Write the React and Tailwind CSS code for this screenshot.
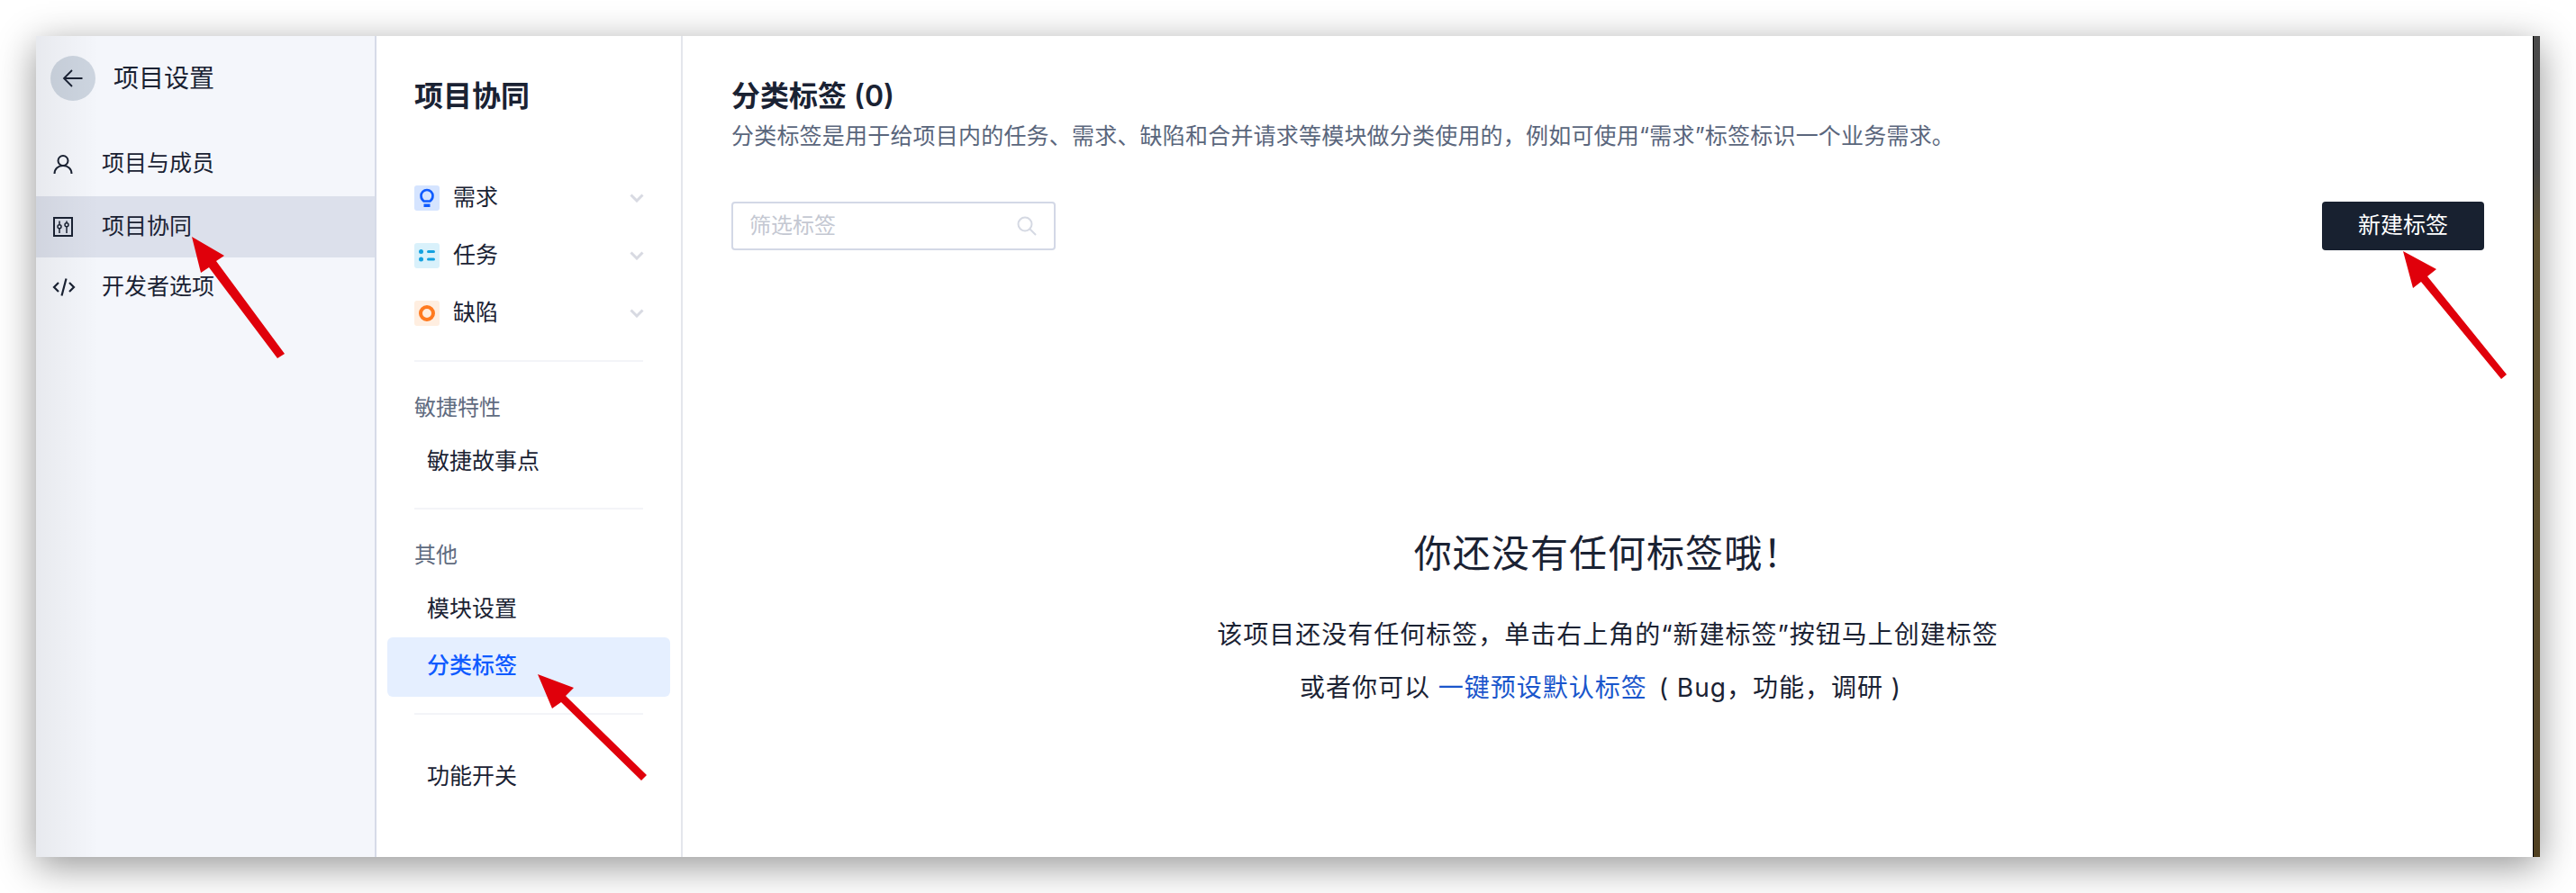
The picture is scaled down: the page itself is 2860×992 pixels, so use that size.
import React from "react";

const COMMA = "\uFF0C";

function Back() {
  return (
    <svg width="24" height="24" viewBox="0 0 24 24" fill="none" stroke="#1a2233" strokeWidth="1.8">
      <path d="M22.5 12H2M11 3l-9 9 9 9" />
    </svg>
  );
}
function UserIcon() {
  return (
    <svg width="24" height="24" viewBox="0 0 24 24" fill="none" stroke="#1a2233" strokeWidth="2">
      <circle cx="12" cy="8.5" r="5.5" />
      <path d="M2.5 23c0-5.5 4-9 9.5-9s9.5 3.5 9.5 9" />
    </svg>
  );
}
function SliderIcon() {
  return (
    <svg width="24" height="24" viewBox="0 0 24 24" fill="none" stroke="#1a2233" strokeWidth="2">
      <rect x="2" y="2" width="20" height="20" />
      <path d="M8 5.5v4M8 14v5M16 5.5v2M16 12v7" strokeWidth="1.5" />
      <circle cx="8" cy="11.8" r="2" strokeWidth="1.5" />
      <circle cx="16" cy="9.7" r="2" strokeWidth="1.5" />
    </svg>
  );
}
function CodeIcon() {
  return (
    <svg width="26" height="24" viewBox="0 0 26 24" fill="none" stroke="#1a2233" strokeWidth="2.2">
      <path d="M7 7l-5 5 5 5M19 7l5 5-5 5" />
      <path d="M15.5 2.5L10.5 21.5" />
    </svg>
  );
}
function Chevron() {
  return (
    <svg width="16" height="10" viewBox="0 0 16 10" fill="none" stroke="#d8dae2" strokeWidth="3">
      <path d="M1.5 1.5L8 8l6.5-6.5" />
    </svg>
  );
}
function Bulb() {
  return (
    <span className="flex h-7 w-7 items-center justify-center rounded-[3px] bg-[#d5e4ff]">
      <svg width="16" height="22" viewBox="0 0 16 22" fill="none">
        <path d="M4.5 14.5C2.600 13 1.500 11 1.500 8.500a6.500 6.500 0 0 1 13 0c0 2.500-1.100 4.500-3 6z" stroke="#0f5bff" strokeWidth="2.600" />
        <rect x="4.500" y="17.500" width="7" height="3.500" fill="#0f5bff" />
      </svg>
    </span>
  );
}
function TaskIcon() {
  return (
    <span className="flex h-7 w-7 items-center justify-center rounded-[3px] bg-[#d9f1fb]">
      <svg width="18" height="14" viewBox="0 0 18 14" fill="#12a1e0">
        <circle cx="2.500" cy="2.500" r="2.500" />
        <circle cx="2.500" cy="11" r="2.500" />
        <rect x="9" y="1" width="9" height="3" rx="1.500" />
        <rect x="9" y="9.500" width="9" height="3" rx="1.500" />
      </svg>
    </span>
  );
}
function BugIcon() {
  return (
    <span className="flex h-7 w-7 items-center justify-center rounded-[3px] bg-[#ffeee0]">
      <span className="h-[18px] w-[18px] rounded-full border-4 border-[#ff7a1f]" />
    </span>
  );
}
function SearchIcon() {
  return (
    <svg width="22" height="22" viewBox="0 0 22 22" fill="none" stroke="#d5d9e3" strokeWidth="2">
      <circle cx="9" cy="9" r="7.500" />
      <path d="M14.500 14.500L21 21" />
    </svg>
  );
}
function Arrow({ points }) {
  return <polygon points={points} fill="#e0000b" />;
}
function Divider() {
  return <div className="mx-[42px] h-[2px] bg-[#f3f4f8]" />;
}

export default function App() {
  return (
    <div lang="zh-CN" className="relative h-[992px] w-[2860px] overflow-hidden bg-white p-10 font-[Inter,'Noto_Sans_CJK_SC',sans-serif] text-[#1a2233]">
      <div className="flex h-[912px] w-[2780px] bg-white shadow-[0_10px_40px_rgba(0,0,0,0.42)]">
        <aside className="relative flex w-[378px] shrink-0 flex-col border-r-2 border-[#d6dbe8] bg-[#f4f6fb]">
          <div className="flex items-center gap-5 pl-4 pt-[22px]">
            <button className="flex h-[50px] w-[50px] items-center justify-center rounded-full bg-[#cdd5e0]"><Back /></button>
            <span className="text-[28px] leading-[50px]">项目设置</span>
          </div>
          <nav className="mt-[36px] flex flex-col">
            <div className="flex h-[68px] items-center gap-[31px] pl-[18px] text-[25px]"><UserIcon /><span>项目与成员</span></div>
            <div className="mt-[2px] flex h-[68px] items-center gap-[31px] bg-[#dce0eb] pl-[18px] text-[25px]"><SliderIcon /><span>项目协同</span></div>
            <div className="flex h-[66px] items-center gap-[29px] pl-[18px] text-[25px]"><CodeIcon /><span>开发者选项</span></div>
          </nav>
          <div className="pointer-events-none absolute inset-y-0 left-0 w-[70px] bg-[linear-gradient(90deg,rgba(0,0,0,0.05),rgba(0,0,0,0))]" />
        </aside>

        <section className="flex w-[340px] shrink-0 flex-col border-r-2 border-[#e4e6ec]">
          <h2 className="pl-[42px] pt-[44px] text-[32px] font-bold leading-[46px]">项目协同</h2>
          <div className="mt-[58px] flex flex-col text-[25px]">
            <div className="flex h-16 items-center pl-[42px] pr-[41px]"><Bulb /><span className="ml-[15px] flex-1">需求</span><Chevron /></div>
            <div className="flex h-16 items-center pl-[42px] pr-[41px]"><TaskIcon /><span className="ml-[15px] flex-1">任务</span><Chevron /></div>
            <div className="flex h-16 items-center pl-[42px] pr-[41px]"><BugIcon /><span className="ml-[15px] flex-1">缺陷</span><Chevron /></div>
          </div>
          <div className="mt-[20px]"><Divider /></div>
          <div className="mt-[35px] pl-[42px] text-2xl leading-8 text-[#5f6b80]">敏捷特性</div>
          <div className="mt-[25px] pl-[56px] text-[25px] leading-9">敏捷故事点</div>
          <div className="mt-[34px]"><Divider /></div>
          <div className="mt-[35px] pl-[42px] text-2xl leading-8 text-[#5f6b80]">其他</div>
          <div className="mt-[25px] pl-[56px] text-[25px] leading-9">模块设置</div>
          <div className="mx-3 mt-[14px] flex h-[66px] items-center rounded-md bg-[#e5efff] pb-0.5 pl-11 text-[25px] font-medium text-[#0f5bff]">分类标签</div>
          <div className="mt-[18px]"><Divider /></div>
          <div className="mt-[50px] pl-[56px] text-[25px] leading-9">功能开关</div>
        </section>

        <main className="flex min-w-0 flex-1 flex-col px-[54px]">
          <h1 className="pt-[48px] text-[32px] font-semibold leading-[38px]">分类标签 (0)</h1>
          <p className="mt-[9px] text-[25px] leading-8 tracking-[0.2px] text-[#5a667c]">分类标签是用于给项目内的任务、需求、缺陷和合并请求等模块做分类使用的{COMMA}例如可使用“需求”标签标识一个业务需求。</p>
          <div className="mt-[57px] flex items-center justify-between">
            <label className="flex h-[54px] w-[360px] items-center rounded border-2 border-[#d3d8e6] pl-[18px] pr-[19px]">
              <input placeholder="筛选标签" className="min-w-0 flex-1 bg-transparent text-2xl outline-none placeholder:text-[#c4c8d2]" />
              <SearchIcon />
            </label>
            <button className="h-[54px] w-[180px] rounded bg-[#182130] text-[25px] text-white">新建标签</button>
          </div>
          <div className="mt-[307px] flex flex-col items-center">
            <h3 className="text-[42px] font-normal leading-[60px] tracking-wide">你还没有任何标签哦！</h3>
            <p className="mt-[40px] text-[28px] leading-10 tracking-[1px]">该项目还没有任何标签{COMMA}单击右上角的“新建标签”按钮马上创建标签</p>
            <p className="mr-4 mt-[19px] text-[28px] leading-10 tracking-[1px]">或者你可以 <span className="text-[#1a56cc]">一键预设默认标签</span> <span className="ml-[4px]">(</span> Bug{COMMA}功能{COMMA}调研 <span>)</span></p>
          </div>
        </main>

        <div className="w-2 shrink-0 border-l border-black bg-[linear-gradient(180deg,#4a4a4a_0%,#454545_16%,#5d5030_24%,#5a4d2c_60%,#55462a_90%,#4f3f20_100%)]" />
      </div>

      <svg className="pointer-events-none absolute left-0 top-0" width="2860" height="992">
        <Arrow points="213,263 249,284 240,290 316,393 308,398 232,297 223,303" />
        <Arrow points="597,749 637,764 628,773 718,861 712,867 623,780 613,787" />
        <Arrow points="2668,279 2705,299 2695,307 2783,416 2777,421 2688,313 2679,320" />
      </svg>
    </div>
  );
}
